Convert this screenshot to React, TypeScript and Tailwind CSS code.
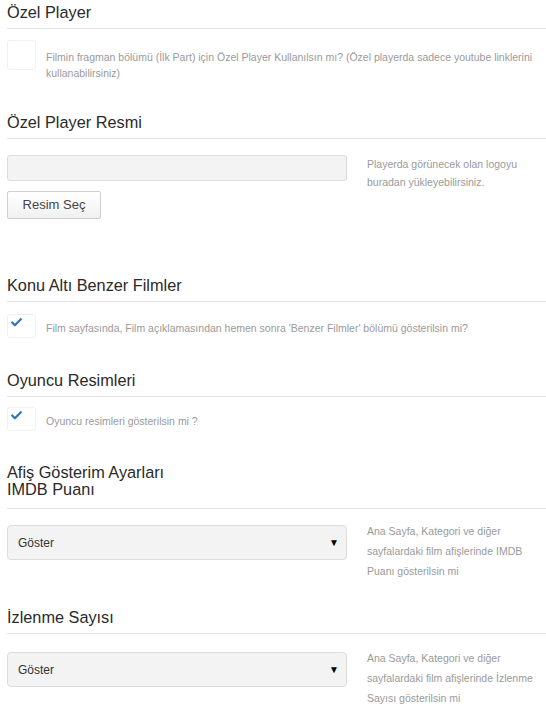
import { Check } from "lucide-react";

function Heading({ children, className = "" }: { children: React.ReactNode; className?: string }) {
  return (
    <div className={`border-b border-[#e3e3e3] text-[16.3px] text-[#2a2a2a] ${className}`}>
      {children}
    </div>
  );
}

function Toggle({ checked = false, className = "" }: { checked?: boolean; className?: string }) {
  return (
    <div
      className={`relative w-[29px] shrink-0 rounded-[3px] border border-[#f1f1f1] bg-white ${className}`}
    >
      {checked ? (
        <Check className="absolute left-[2px] top-[1px] h-[13px] w-[13px] text-[#2a72bd]" strokeWidth={4} />
      ) : null}
    </div>
  );
}

function Help({ children, className = "" }: { children: React.ReactNode; className?: string }) {
  return <p className={`text-[10.5px] text-[#9a9a9a] ${className}`}>{children}</p>;
}

function SelectBox() {
  return (
    <div className="flex h-[35px] w-[340px] shrink-0 items-center justify-between rounded-[4px] border border-[#dcdcdc] bg-[#f3f3f3] pl-[10px] pr-[7px] text-[12px] text-[#333]">
      <span>Göster</span>
      <span className="text-[10px] leading-none text-black">▼</span>
    </div>
  );
}

export default function App() {
  return (
    <div className="h-[714px] w-[546px] overflow-hidden bg-white pl-[7px] font-['Liberation_Sans',Arial,sans-serif]">
      <Heading className="mt-[2px] pb-[6px] leading-[20px]">Özel Player</Heading>
      <div className="mt-[11px] flex">
        <Toggle className="h-[30px]" />
        <Help className="ml-[10px] pr-[6px] pt-[9px] leading-[16px]">
          Filmin fragman bölümü (İlk Part) için Özel Player Kullanılsın mı? (Özel playerda sadece youtube linklerini
          kullanabilirsiniz)
        </Help>
      </div>

      <Heading className="mt-[31px] pb-[6px] leading-[20px]">Özel Player Resmi</Heading>
      <div className="mt-[16px] flex items-start">
        <div className="h-[26px] w-[340px] shrink-0 rounded-[3px] border border-[#dcdcdc] bg-[#f3f3f3]" />
        <Help className="ml-[20px] w-[160px] leading-[18px]">
          Playerda görünecek olan logoyu buradan yükleyebilirsiniz.
        </Help>
      </div>
      <button
        type="button"
        className="h-[28px] w-[94px] rounded-[2px] border border-[#cfcfcf] bg-gradient-to-b from-white to-[#f1f1f1] text-[13px] text-[#444]"
      >
        Resim Seç
      </button>

      <Heading className="mt-[56px] pb-[6px] leading-[20px]">Konu Altı Benzer Filmler</Heading>
      <div className="mt-[12px] flex">
        <Toggle checked className="h-[24px]" />
        <Help className="ml-[10px] pt-[6px] leading-[16px]">
          Film sayfasında, Film açıklamasından hemen sonra 'Benzer Filmler' bölümü gösterilsin mi?
        </Help>
      </div>

      <Heading className="mt-[32px] pb-[6px] leading-[20px]">Oyuncu Resimleri</Heading>
      <div className="mt-[10px] flex">
        <Toggle checked className="h-[24px]" />
        <Help className="ml-[10px] pt-[6px] leading-[16px]">Oyuncu resimleri gösterilsin mi ?</Help>
      </div>

      <Heading className="mt-[33px] pb-[10px] leading-[17px]">
        Afiş Gösterim Ayarları
        <br />
        IMDB Puanı
      </Heading>
      <div className="mt-[16px] flex items-start">
        <SelectBox />
        <Help className="-mt-[4px] ml-[20px] w-[172px] leading-[20px]">
          Ana Sayfa, Kategori ve diğer sayfalardaki film afişlerinde IMDB Puanı gösterilsin mi
        </Help>
      </div>

      <Heading className="mt-[26px] pb-[6px] leading-[20px]">İzlenme Sayısı</Heading>
      <div className="mt-[18px] flex items-start">
        <SelectBox />
        <Help className="-mt-[4px] ml-[20px] w-[172px] leading-[20px]">
          Ana Sayfa, Kategori ve diğer sayfalardaki film afişlerinde İzlenme Sayısı gösterilsin mi
        </Help>
      </div>
    </div>
  );
}
